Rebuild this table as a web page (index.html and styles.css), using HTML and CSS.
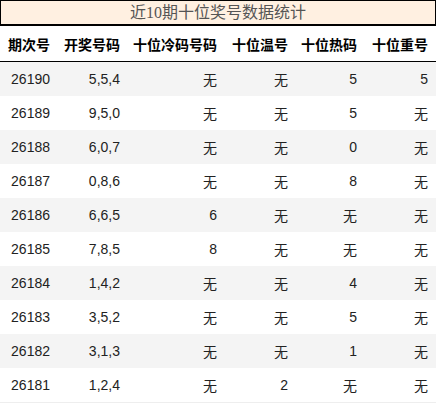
FILE: index.html
```html
<!DOCTYPE html>
<html lang="zh">
<head>
<meta charset="utf-8">
<link rel="stylesheet" href="styles.css">
</head>
<body>
<div class="stats">
  <div class="title">近10期十位奖号数据统计</div>
  <table class="grid">
    <colgroup>
      <col class="c1"><col class="c2"><col class="c3"><col class="c4"><col class="c5"><col class="c6">
    </colgroup>
    <thead>
      <tr><th>期次号</th><th>开奖号码</th><th>十位冷码号码</th><th>十位温号</th><th>十位热码</th><th>十位重号</th></tr>
    </thead>
    <tbody>
      <tr><td>26190</td><td>5,5,4</td><td>无</td><td>无</td><td>5</td><td>5</td></tr>
      <tr><td>26189</td><td>9,5,0</td><td>无</td><td>无</td><td>5</td><td>无</td></tr>
      <tr><td>26188</td><td>6,0,7</td><td>无</td><td>无</td><td>0</td><td>无</td></tr>
      <tr><td>26187</td><td>0,8,6</td><td>无</td><td>无</td><td>8</td><td>无</td></tr>
      <tr><td>26186</td><td>6,6,5</td><td>6</td><td>无</td><td>无</td><td>无</td></tr>
      <tr><td>26185</td><td>7,8,5</td><td>8</td><td>无</td><td>无</td><td>无</td></tr>
      <tr><td>26184</td><td>1,4,2</td><td>无</td><td>无</td><td>4</td><td>无</td></tr>
      <tr><td>26183</td><td>3,5,2</td><td>无</td><td>无</td><td>5</td><td>无</td></tr>
      <tr><td>26182</td><td>3,1,3</td><td>无</td><td>无</td><td>1</td><td>无</td></tr>
      <tr><td>26181</td><td>1,2,4</td><td>无</td><td>2</td><td>无</td><td>无</td></tr>
    </tbody>
  </table>
</div>
</body>
</html>
```
FILE: styles.css
```css
html, body {
  margin: 0;
  padding: 0;
  background: #fff;
}
.stats {
  width: 436px;
}
.title {
  box-sizing: border-box;
  height: 26px;
  border: 1px solid #000;
  border-bottom-width: 2px;
  background: #fff0e1;
  color: #555;
  font-family: "Liberation Serif", "Noto Sans CJK SC", serif;
  font-size: 16px;
  line-height: 23px;
  text-align: center;
}
.grid {
  width: 436px;
  border-collapse: collapse;
  table-layout: fixed;
  font-family: "Liberation Sans", "Noto Sans CJK SC", sans-serif;
}
.c1 { width: 58px; }
.c2 { width: 70px; }
.c3 { width: 97px; }
.c4 { width: 71px; }
.c5 { width: 69px; }
.c6 { width: 71px; }
.grid th {
  height: 35px;
  padding: 0 8px 0 0;
  text-align: right;
  font-size: 14px;
  font-weight: bold;
  color: #000;
  border-bottom: 1px solid #000;
  white-space: nowrap;
}
.grid td {
  height: 34px;
  padding: 0 8px 0 0;
  text-align: right;
  font-size: 14px;
  color: #222;
  white-space: nowrap;
}
.grid tbody tr:nth-child(odd) {
  background: #f4f4f4;
}
.grid tbody tr:last-child td {
  border-bottom: 1px solid #eee;
}
```
